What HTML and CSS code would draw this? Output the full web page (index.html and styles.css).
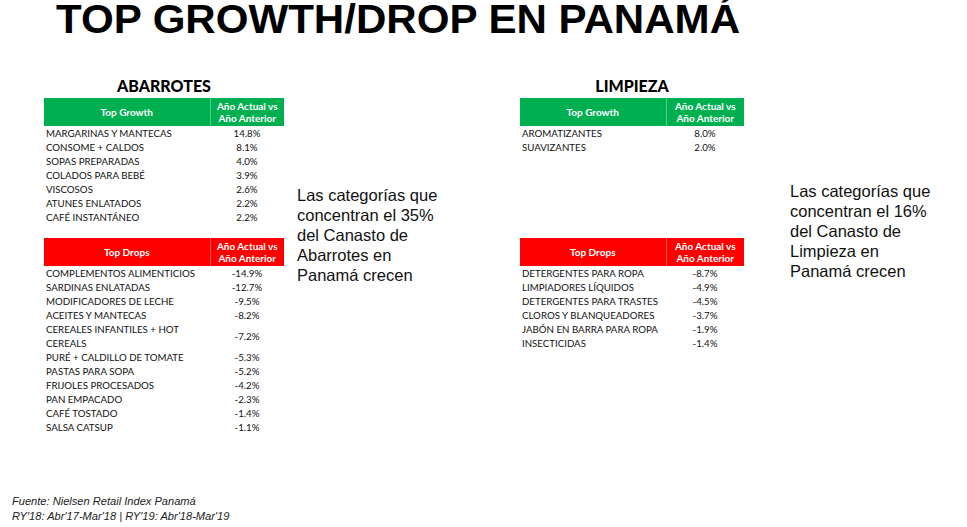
FILE: index.html
```html
<!DOCTYPE html>
<html lang="es">
<head>
<meta charset="utf-8">
<title>Top Growth/Drop en Panamá</title>
<link rel="stylesheet" href="styles.css">
</head>
<body>
<div class="page">
  <div class="title-wrap"><h1 class="title">TOP GROWTH/DROP EN PANAMÁ</h1></div>
  <div class="main">
    <div class="section s1">
      <div class="panel p1">
        <h2 class="sec-title">ABARROTES</h2>
        <div class="growth">
          <table class="tbl">
            <thead><tr class="hd green"><th class="c1">Top Growth</th><th class="c2">Año Actual vs<br>Año Anterior</th></tr></thead>
            <tbody>
              <tr><td>MARGARINAS Y MANTECAS</td><td class="v">14.8%</td></tr>
              <tr><td>CONSOME + CALDOS</td><td class="v">8.1%</td></tr>
              <tr><td>SOPAS PREPARADAS</td><td class="v">4.0%</td></tr>
              <tr><td>COLADOS PARA BEBÉ</td><td class="v">3.9%</td></tr>
              <tr><td>VISCOSOS</td><td class="v">2.6%</td></tr>
              <tr><td>ATUNES ENLATADOS</td><td class="v">2.2%</td></tr>
              <tr><td>CAFÉ INSTANTÁNEO</td><td class="v">2.2%</td></tr>
            </tbody>
          </table>
        </div>
        <table class="tbl">
          <thead><tr class="hd red"><th class="c1">Top Drops</th><th class="c2">Año Actual vs<br>Año Anterior</th></tr></thead>
          <tbody>
            <tr><td>COMPLEMENTOS ALIMENTICIOS</td><td class="v">-14.9%</td></tr>
            <tr><td>SARDINAS ENLATADAS</td><td class="v">-12.7%</td></tr>
            <tr><td>MODIFICADORES DE LECHE</td><td class="v">-9.5%</td></tr>
            <tr><td>ACEITES Y MANTECAS</td><td class="v">-8.2%</td></tr>
            <tr class="two"><td>CEREALES INFANTILES + HOT<br>CEREALS</td><td class="v">-7.2%</td></tr>
            <tr><td>PURÉ + CALDILLO DE TOMATE</td><td class="v">-5.3%</td></tr>
            <tr><td>PASTAS PARA SOPA</td><td class="v">-5.2%</td></tr>
            <tr><td>FRIJOLES PROCESADOS</td><td class="v">-4.2%</td></tr>
            <tr><td>PAN EMPACADO</td><td class="v">-2.3%</td></tr>
            <tr><td>CAFÉ TOSTADO</td><td class="v">-1.4%</td></tr>
            <tr><td>SALSA CATSUP</td><td class="v">-1.1%</td></tr>
          </tbody>
        </table>
      </div>
      <p class="note n1">Las categorías que<br>concentran el 35%<br>del Canasto de<br>Abarrotes en<br>Panamá crecen</p>
    </div>
    <div class="section s2">
      <div class="panel p2">
        <h2 class="sec-title">LIMPIEZA</h2>
        <div class="growth">
          <table class="tbl">
            <thead><tr class="hd green"><th class="c1">Top Growth</th><th class="c2">Año Actual vs<br>Año Anterior</th></tr></thead>
            <tbody>
              <tr><td>AROMATIZANTES</td><td class="v">8.0%</td></tr>
              <tr><td>SUAVIZANTES</td><td class="v">2.0%</td></tr>
            </tbody>
          </table>
        </div>
        <table class="tbl">
          <thead><tr class="hd red"><th class="c1">Top Drops</th><th class="c2">Año Actual vs<br>Año Anterior</th></tr></thead>
          <tbody>
            <tr><td>DETERGENTES PARA ROPA</td><td class="v">-8.7%</td></tr>
            <tr><td>LIMPIADORES LÍQUIDOS</td><td class="v">-4.9%</td></tr>
            <tr><td>DETERGENTES PARA TRASTES</td><td class="v">-4.5%</td></tr>
            <tr><td>CLOROS Y BLANQUEADORES</td><td class="v">-3.7%</td></tr>
            <tr><td>JABÓN EN BARRA PARA ROPA</td><td class="v">-1.9%</td></tr>
            <tr><td>INSECTICIDAS</td><td class="v">-1.4%</td></tr>
          </tbody>
        </table>
      </div>
      <p class="note n2">Las categorías que<br>concentran el 16%<br>del Canasto de<br>Limpieza en<br>Panamá crecen</p>
    </div>
  </div>
  <footer class="foot">
    <div>Fuente: Nielsen Retail Index Panamá</div>
    <div>RY'18: Abr'17-Mar'18 | RY'19: Abr'18-Mar'19</div>
  </footer>
</div>
</body>
</html>
```
FILE: styles.css
```css
* { box-sizing: border-box; }
html, body { margin: 0; padding: 0; background: #fff; }
body { font-family: "Liberation Sans", Arial, sans-serif; color: #000; }

.page {
  width: 967px;
  height: 527px;
  display: flex;
  flex-direction: column;
  overflow: hidden;
}

.title-wrap {
  height: 39px;
  padding-left: 56px;
}
.title {
  display: inline-block;
  margin: 0;
  font-family: "Liberation Sans", Arial, sans-serif;
  font-weight: bold;
  font-size: 41px;
  line-height: 39px;
  white-space: nowrap;
  transform: scaleX(1.026);
  transform-origin: left center;
}

.main {
  display: flex;
  margin-top: 39px;
}

.section { display: flex; align-items: flex-start; }
.s1 { margin-left: 44px; }

.panel { display: flex; flex-direction: column; }
.p1 { width: 240px; }
.p2 { width: 224px; }

.sec-title {
  margin: 0 0 4px 0;
  font-family: Lato, "Liberation Sans", sans-serif;
  font-weight: 900;
  font-size: 16px;
  line-height: 16px;
  height: 16px;
  text-align: center;
  color: #000;
}

.growth { height: 140px; }

.tbl {
  width: 100%;
  border-collapse: collapse;
  table-layout: fixed;
  font-family: Lato, "Liberation Sans", sans-serif;
  font-size: 9.7px;
}
.p1 .c1 { width: 166px; }
.p2 .c1 { width: 146px; }

.hd th {
  height: 28px;
  padding: 0;
  color: #fff;
  font-weight: bold;
  font-size: 10px;
  line-height: 12px;
  text-align: center;
  vertical-align: middle;
}
.hd .c2 { border-left: 1px solid rgba(255,255,255,0.35); }
.green { background: #00b050; }
.red { background: #ff0000; }

.tbl td {
  height: 14px;
  line-height: 14px;
  padding: 0 0 0 2px;
  white-space: nowrap;
  vertical-align: middle;
  color: #111;
}
.tbl td.v { text-align: center; padding: 0; }
.tbl tr.two td { height: 28px; }

.note {
  margin: 0;
  font-family: "Liberation Sans", Arial, sans-serif;
  font-size: 16.5px;
  line-height: 20px;
  color: #111;
  white-space: nowrap;
}
.n1 { margin-left: 13px; width: 223px; margin-top: 107px; }
.n2 { margin-left: 46px; margin-top: 103px; }

.foot {
  margin-top: auto;
  padding: 0 0 3px 12px;
  font-family: "Liberation Sans", Arial, sans-serif;
  font-style: italic;
  font-size: 11.1px;
  line-height: 15px;
  color: #222;
}
```
